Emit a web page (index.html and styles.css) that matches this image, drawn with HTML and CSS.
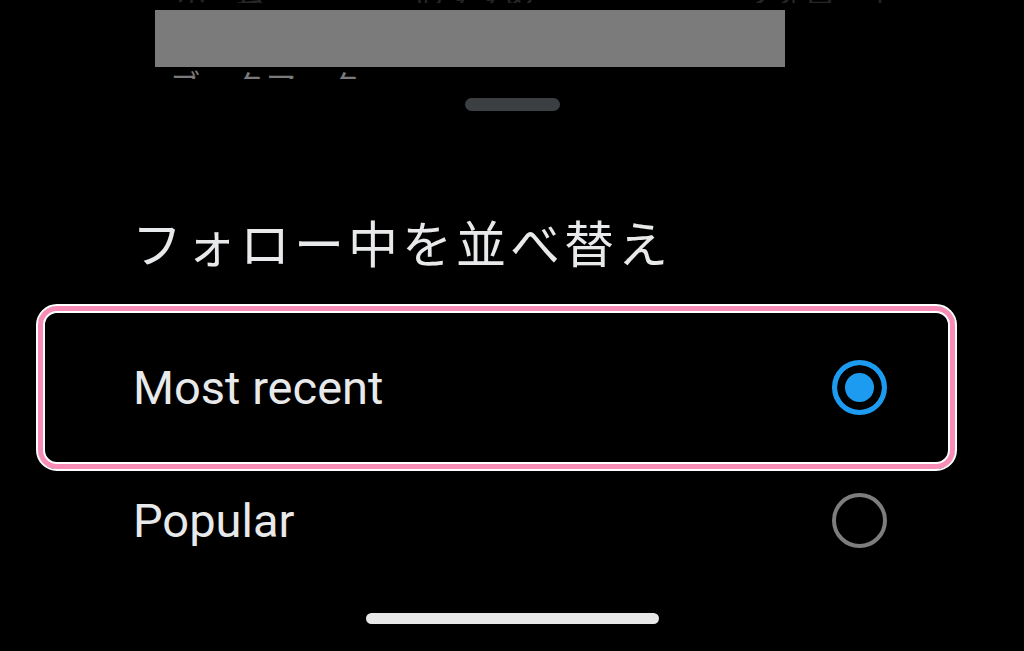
FILE: index.html
```html
<!DOCTYPE html>
<html lang="ja">
<head>
<meta charset="utf-8">
<title>フォロー中を並べ替え</title>
<link rel="stylesheet" href="styles.css">
</head>
<body>
<div class="backdrop">
  <div class="peek peek-top"><span class="peek-text">ホーム　　　　　おすすめ　　　　　　　フォロー中</span></div>
  <div class="redact"></div>
  <div class="peek peek-bottom"><span class="peek-text">ブックマーク</span></div>
</div>
<div class="sheet">
  <div class="grabber"></div>
  <h1 class="title">フォロー中を並べ替え</h1>
  <div class="options">
    <div class="option selected">
      <span class="label">Most recent</span>
      <span class="radio on"></span>
    </div>
    <div class="option">
      <span class="label">Popular</span>
      <span class="radio"></span>
    </div>
  </div>
  <div class="home-indicator"></div>
</div>
</body>
</html>
```
FILE: styles.css
```css
html, body {
  margin: 0;
  padding: 0;
  background: #000;
}
body {
  width: 1024px;
  height: 651px;
  overflow: hidden;
  font-family: Roboto, "Noto Sans CJK JP", sans-serif;
  color: #e7e9ea;
}
.backdrop {
  height: 86px;
  display: flex;
  flex-direction: column;
}
.peek {
  overflow: hidden;
  font-family: "Noto Sans CJK JP", sans-serif;
  color: #6a6a6a;
  font-size: 30px;
  line-height: 30px;
  white-space: nowrap;
}
.peek-top {
  height: 3px;
  display: flex;
  align-items: flex-end;
  padding-left: 176px;
}
.peek-top .peek-text {
  display: block;
  margin-bottom: -4px;
  color: #262626;
}
.redact {
  margin: 7px 0 0 155px;
  width: 630px;
  height: 57px;
  background: #7b7b7b;
}
.peek-bottom {
  height: 12px;
  padding-left: 170px;
  color: #7a7a7a;
  letter-spacing: 2px;
}
.peek-bottom .peek-text {
  display: block;
  margin-top: 1px;
}
.sheet {
  display: flex;
  flex-direction: column;
}
.grabber {
  margin: 12px auto 0;
  width: 95px;
  height: 13px;
  border-radius: 7px;
  background: #3c3f42;
}
.title {
  margin: 100px 0 0 132px;
  font-family: "Noto Sans CJK JP", sans-serif;
  font-weight: 400;
  font-size: 50px;
  line-height: 60px;
  letter-spacing: 4px;
  color: #e7e9ea;
}
.options {
  margin-top: 50px;
  display: flex;
  flex-direction: column;
}
.option {
  position: relative;
  height: 133px;
  padding: 0 137px 0 133px;
  display: flex;
  align-items: center;
  justify-content: space-between;
}
.option.selected::before {
  content: "";
  position: absolute;
  top: -17px;
  bottom: -17px;
  left: 36px;
  right: 67px;
  border: 2px solid #fff;
  border-radius: 21px;
  box-shadow: inset 0 0 0 5px #f98cb6, inset 0 0 0 7px #fff;
  pointer-events: none;
}
.label {
  font-size: 47px;
  line-height: 54px;
  color: #e7e9ea;
}
.radio {
  width: 55px;
  height: 55px;
  box-sizing: border-box;
  border-radius: 50%;
  border: 4px solid #7d7d7d;
}
.radio.on {
  border: 5px solid #1d9bf0;
  background: #1d9bf0;
  box-shadow: inset 0 0 0 8px #000;
}
.home-indicator {
  margin: 26px auto 0;
  width: 293px;
  height: 11px;
  border-radius: 6px;
  background: #e8e8e8;
}
```
